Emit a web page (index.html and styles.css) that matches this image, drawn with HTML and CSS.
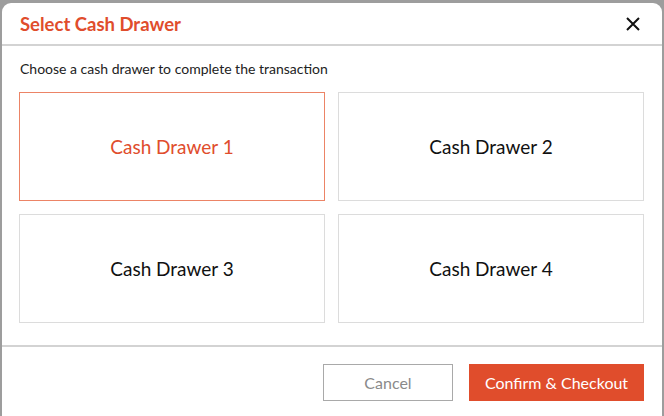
FILE: index.html
```html
<!DOCTYPE html>
<html>
<head>
<meta charset="utf-8">
<link rel="stylesheet" href="styles.css">
</head>
<body>
<div class="modal">
  <div class="modal-header">
    <h1 class="modal-title">Select Cash Drawer</h1>
    <button class="close-btn" aria-label="Close">
      <svg width="16" height="16" viewBox="0 0 16 16"><path d="M2 2 L14 14 M14 2 L2 14" stroke="#111" stroke-width="2" fill="none"/></svg>
    </button>
  </div>
  <div class="modal-body">
    <p class="prompt">Choose a cash drawer to complete the transaction</p>
    <div class="drawer-grid">
      <div class="drawer selected">Cash Drawer 1</div>
      <div class="drawer">Cash Drawer 2</div>
      <div class="drawer">Cash Drawer 3</div>
      <div class="drawer">Cash Drawer 4</div>
    </div>
  </div>
  <div class="modal-footer">
    <button class="btn btn-cancel">Cancel</button>
    <button class="btn btn-confirm">Confirm &amp; Checkout</button>
  </div>
</div>
</body>
</html>
```
FILE: styles.css
```css
html, body {
  margin: 0;
  padding: 0;
}
body {
  width: 664px;
  height: 416px;
  overflow: hidden;
  background: #9d9d9d;
  font-family: Lato, "Liberation Sans", sans-serif;
}
.modal {
  margin: 3px 0 0 2px;
  width: 660px;
  height: 413px;
  background: #fff;
  border-radius: 9px 9px 0 0;
}
.modal-header {
  height: 41px;
  display: flex;
  align-items: center;
  justify-content: space-between;
  padding: 0 21px 0 18px;
  border-bottom: 2px solid #d3d3d3;
}
.modal-title {
  margin: 0;
  font-size: 18.5px;
  font-weight: 700;
  color: #e04d2c;
}
.close-btn {
  border: none;
  background: none;
  padding: 0;
  width: 16px;
  height: 16px;
  display: flex;
}
.modal-body {
  padding: 0 18px 22px 17px;
  border-bottom: 2px solid #d3d3d3;
}
.prompt {
  margin: 0;
  padding: 14px 0 14px 1px;
  font-size: 14px;
  line-height: 18px;
  color: #222;
}
.drawer-grid {
  display: grid;
  grid-template-columns: 1fr 1fr;
  gap: 13px;
}
.drawer {
  height: 107px;
  border: 1px solid #dcdcdc;
  display: flex;
  align-items: center;
  justify-content: center;
  font-size: 19px;
  color: #111;
}
.drawer.selected {
  border-color: #ec8466;
  color: #e04d2c;
}
.modal-footer {
  display: flex;
  justify-content: flex-end;
  gap: 16px;
  padding: 17px 18px 0 0;
}
.btn {
  height: 37px;
  font-family: inherit;
  font-size: 16px;
  padding: 0;
}
.btn-cancel {
  width: 130px;
  background: #fff;
  border: 1px solid #a9a9a9;
  color: #8a8a8a;
}
.btn-confirm {
  width: 175px;
  background: #e04d2c;
  border: 1px solid #e04d2c;
  color: #fff;
}
```
